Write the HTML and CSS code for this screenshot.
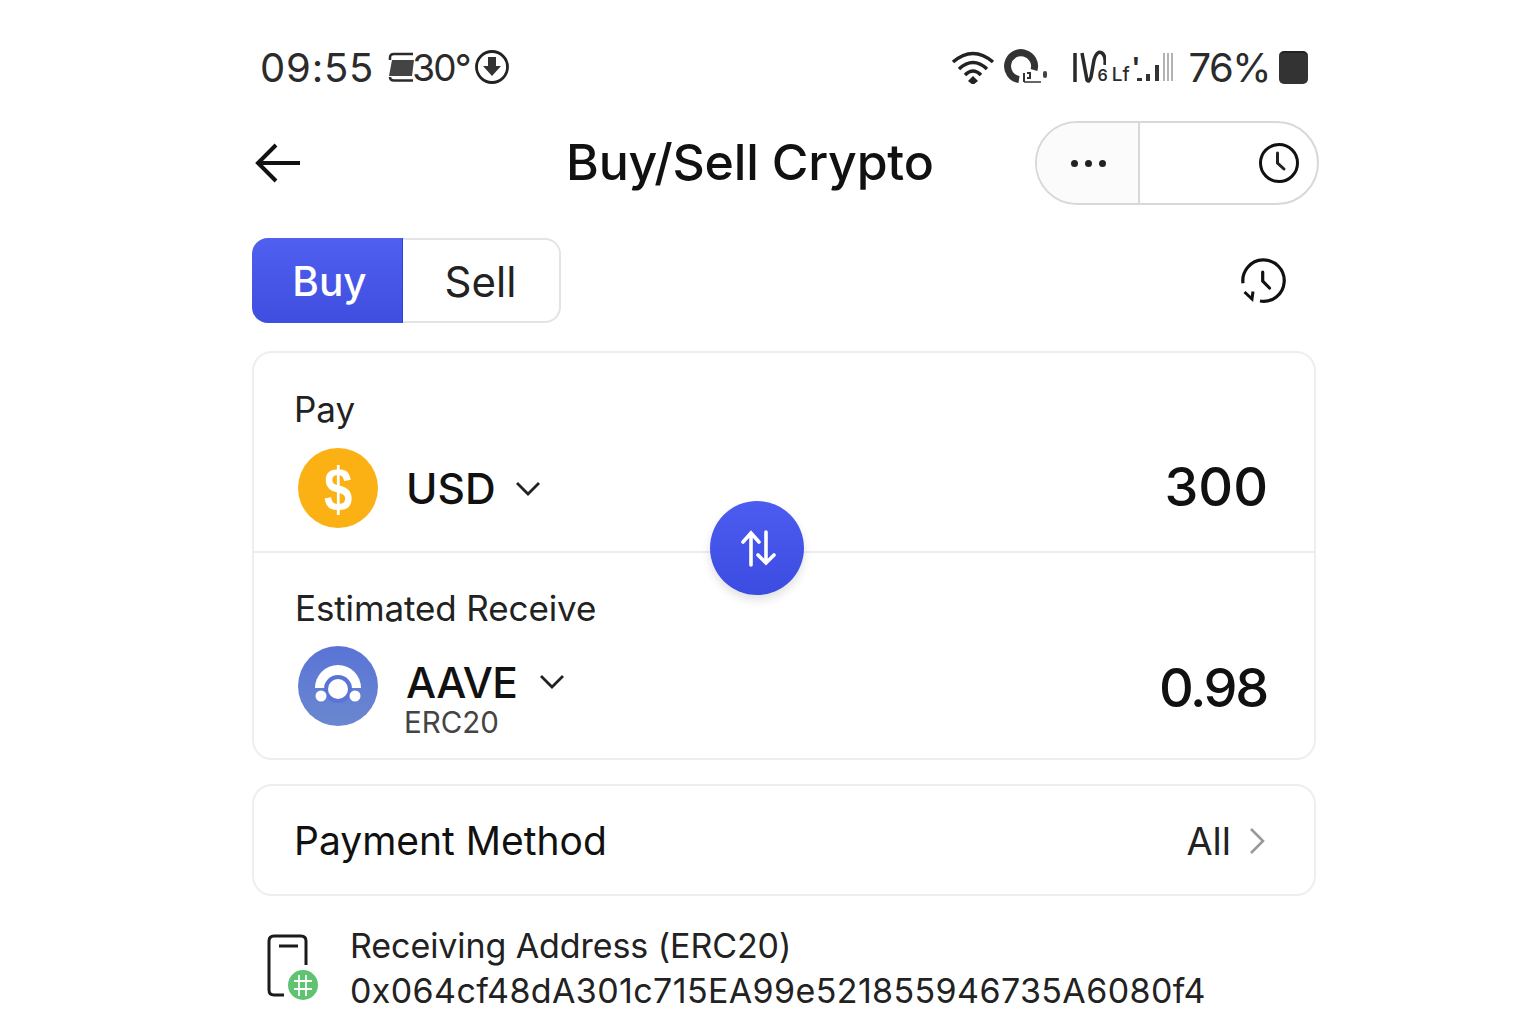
FILE: index.html
```html
<!DOCTYPE html>
<html lang="en">
<head>
<meta charset="UTF-8">
<title>Buy/Sell Crypto</title>
<link rel="stylesheet" href="styles.css">
</head>
<body>
<div class="screen">

  <div class="status">
    <div class="status-side">
      <span class="time">09:55</span>
      <svg class="ic-sim" width="28" height="32" viewBox="0 0 28 32"><path d="M3 9V6.500Q3 3 7 3H26M3 26Q3 29.500 7 29.500H26" fill="none" stroke="#2b2b2b" stroke-width="2.500"/><path d="M5 9H27L25 25H2Z" fill="#444"/></svg>
      <span class="temp">30°</span>
      <svg width="36" height="36" viewBox="0 0 36 36"><circle cx="18" cy="18" r="15.500" fill="none" stroke="#222" stroke-width="2.800"/><path d="M14 8H22V17H27L18 27L9 17H14Z" fill="#333"/></svg>
    </div>
    <div class="status-side">
      <svg class="ic-wifi" width="44" height="34" viewBox="0 0 44 34"><path d="M2 12Q22 -5 42 12M8 19Q22 6 36 19M14 25Q22 17 30 25" fill="none" stroke="#222" stroke-width="3.500"/><path d="M22 26L27 31L22 35L17 31Z" fill="#222"/></svg>
      <svg class="ic-q" width="46" height="36" viewBox="0 0 46 36"><path d="M16 30.500A13.500 13.500 0 1 1 31 21" fill="none" stroke="#333" stroke-width="7"/><path d="M21 33H38" stroke="#333" stroke-width="1.500"/><path d="M21 24V33M24 24H27V29H24" fill="none" stroke="#333" stroke-width="2"/><rect x="40" y="22" width="4" height="7" rx="2" fill="#444"/></svg>
      <div class="net">
        <svg class="net-mark" width="34" height="34" viewBox="0 0 34 34"><path d="M3 3V32M10 3L15 30Q17 33 19 27L22 10Q25 0 30 3Q34 6 33 15" fill="none" stroke="#2a2a2a" stroke-width="3.500"/></svg>
        <span class="net-a">6</span><span class="net-b">Lf</span><span class="net-c">'</span>
      </div>
      <svg class="ic-bars" width="38" height="32" viewBox="0 0 38 32"><rect x="0" y="27" width="5" height="3" fill="#333"/><rect x="9" y="23" width="4" height="7" fill="#333"/><rect x="18" y="14" width="4" height="16" fill="#333"/><path d="M27 2V30M31 2V30M35 2V30" stroke="#999" stroke-width="1.500"/></svg>
      <span class="batt-num">76%</span>
      <div class="batt"></div>
    </div>
  </div>

  <div class="header">
    <svg class="back" width="48" height="42" viewBox="0 0 48 42"><path d="M46 21H4M22 3L4 21L22 39" fill="none" stroke="#111" stroke-width="4"/></svg>
    <h1 class="title">Buy/Sell Crypto</h1>
    <div class="pill">
      <div class="pill-more"><i></i><i></i><i></i></div>
      <div class="pill-clock">
        <svg width="42" height="42" viewBox="0 0 42 42"><circle cx="21" cy="21" r="18.500" fill="none" stroke="#111" stroke-width="3"/><path d="M19.500 11V21L26 27" fill="none" stroke="#222" stroke-width="3" stroke-linecap="round"/></svg>
      </div>
    </div>
  </div>

  <div class="tabs-row">
    <div class="tabs">
      <div class="tab tab-on">Buy</div>
      <div class="tab">Sell</div>
    </div>
    <svg class="history" width="46" height="46" viewBox="0 0 46 46"><path d="M2 25.300A20.700 20.700 0 1 1 19 43" fill="none" stroke="#111" stroke-width="3.200"/><path d="M21.700 14V23L28.500 30" fill="none" stroke="#111" stroke-width="3.200" stroke-linecap="round"/><path d="M3.500 34L11 41L12 33.500" fill="none" stroke="#111" stroke-width="3"/></svg>
  </div>

  <div class="card swap-card">
    <div class="swap-part part-pay">
      <div class="label">Pay</div>
      <div class="coin-row">
        <div class="coin coin-usd"><span class="dollar">$</span></div>
        <span class="coin-name">USD</span>
        <svg class="chev" width="26" height="16" viewBox="0 0 26 16"><path d="M2 2L13 13L24 2" fill="none" stroke="#222" stroke-width="2.800"/></svg>
        <span class="amount">300</span>
      </div>
    </div>
    <div class="swap-part part-get">
      <div class="label">Estimated Receive</div>
      <div class="coin-row">
        <div class="coin coin-aave">
          <svg width="80" height="80" viewBox="0 0 80 80"><path d="M17 42A23 23 0 0 1 63 42Z" fill="#fff"/><circle cx="40" cy="43" r="14" fill="#5a74d6"/><circle cx="40" cy="43" r="10" fill="#fff"/><circle cx="23" cy="50" r="5.500" fill="#fff"/><circle cx="57" cy="50" r="5.500" fill="#fff"/></svg>
        </div>
        <div class="coin-text">
          <div class="coin-line"><span class="coin-name">AAVE</span>
            <svg class="chev" width="26" height="16" viewBox="0 0 26 16"><path d="M2 2L13 13L24 2" fill="none" stroke="#222" stroke-width="2.800"/></svg>
          </div>
          <div class="chain">ERC20</div>
        </div>
        <span class="amount amount-get">0.98</span>
      </div>
    </div>
    <div class="swap-btn">
      <svg width="40" height="40" viewBox="0 0 40 40"><path d="M14 37V5M6 14L14 5L22 14M29 4V35M21 27L29 35L37 27" fill="none" stroke="#fff" stroke-width="3.600" stroke-linecap="round"/></svg>
    </div>
  </div>

  <div class="card pay-method">
    <span class="pm-label">Payment Method</span>
    <span class="pm-val">All</span>
    <svg class="pm-arrow" width="16" height="28" viewBox="0 0 16 28"><path d="M2 2L14 14L2 26" fill="none" stroke="#999" stroke-width="2.600"/></svg>
  </div>

  <div class="address">
    <div class="addr-icon">
      <svg width="52" height="66" viewBox="0 0 52 66"><path d="M40 31V7Q40 2 35 2H8Q3 2 3 7V56Q3 61 8 61H18M13 12H32" fill="none" stroke="#1b1b1b" stroke-width="3"/><circle cx="37" cy="51" r="15" fill="#5fc372"/><path d="M28 47H46M28 55H46M33 41V62M40 41V62" stroke="#fff" stroke-width="1.800"/></svg>
    </div>
    <div class="addr-text">
      <div class="addr-title">Receiving Address (ERC20)</div>
      <div>0x064cf48dA301c715EA99e521855946735A6080f4</div>
    </div>
  </div>

</div>
</body>
</html>
```

FILE: styles.css
```css
html, body { margin: 0; padding: 0; background: #fff; }
body { font-family: Inter, "Liberation Sans", sans-serif; color: #111; }
.screen { width: 1064px; height: 1024px; margin-left: 252px; }

/* status bar */
.status { display: flex; justify-content: space-between; align-items: center; height: 36px; margin-top: 49px; padding: 0 8px; color: #2b2b2b; }
.status-side { display: flex; align-items: center; }
.time { font-size: 40px; letter-spacing: 0.8px; margin-right: 13px; }
.ic-sim { margin-right: -3px; }
.temp { font-size: 37px; letter-spacing: -1.8px; margin-right: 4px; }
.ic-wifi { margin-right: 8px; }
.ic-q { margin-right: 23px; }
.net { display: flex; align-items: flex-end; height: 34px; width: 65px; }
.net-mark { flex: none; }
.net-a { font-size: 16px; font-weight: 600; margin-left: -9px; line-height: 18px; }
.net-b { font-size: 19px; font-weight: 500; margin-left: 4px; line-height: 19px; }
.net-c { font-size: 26px; font-weight: 700; align-self: center; margin-left: 2px; line-height: 20px; }
.ic-bars { margin: 0 13px 0 0; }
.batt-num { font-size: 40px; letter-spacing: -1.5px; margin-right: 9px; }
.batt { width: 29px; height: 31px; background: #333; border-radius: 5px; border-top: 2px solid #222; }

/* header */
.header { position: relative; display: flex; align-items: center; height: 84px; margin-top: 36px; }
.back { margin-left: 2px; }
.title { position: absolute; left: 314px; top: 9px; margin: 0; font-size: 50px; font-weight: 500; letter-spacing: -0.2px; line-height: 64px; white-space: nowrap; }
.pill { display: flex; flex: none; width: 284px; height: 84px; box-sizing: border-box; margin-left: auto; margin-right: -3px; border: 2px solid #d8d8d8; border-radius: 42px; }
.pill-more { display: flex; align-items: center; justify-content: center; gap: 7px; width: 103px; padding-left: 2px; box-sizing: border-box; border-right: 2px solid #d8d8d8; background: #fbfbfb; border-radius: 40px 0 0 40px; }
.pill-more i { width: 7px; height: 7px; border-radius: 50%; background: #222; }
.pill-clock { flex: 1; display: flex; align-items: center; justify-content: flex-end; padding-right: 17px; }

/* tabs */
.tabs-row { display: flex; justify-content: space-between; align-items: center; margin-top: 33px; height: 85px; }
.tabs { display: flex; width: 309px; height: 85px; box-sizing: border-box; border: 2px solid #e4e4e4; border-left: 0; border-radius: 16px; }
.tab { flex: 1; display: flex; align-items: center; justify-content: center; padding: 1px 1px 0 0; font-size: 42px; color: #222; }
.tab-on { flex: none; width: 151px; height: 85px; margin-top: -2px; padding: 2px 0 0 5px; background: linear-gradient(#4f5ff0, #3f4edf); color: #fff; font-size: 40.500px; font-weight: 500; border-radius: 16px 0 0 16px; border-right: 1px solid #2b3fe0; box-sizing: border-box; }
.history { margin-right: 29px; }

/* cards */
.card { box-sizing: border-box; border: 2px solid #eee; border-radius: 20px; background: #fff; }
.swap-card { position: relative; margin-top: 28px; height: 409px; }
.swap-part { box-sizing: border-box; padding: 0 46px 0 40px; }
.part-pay { height: 200px; border-bottom: 2px solid #ededed; padding-top: 34px; }
.part-get { padding-top: 33px; }
.label { font-size: 35px; line-height: 44px; color: #222; }
.part-get .label { margin-left: 1px; letter-spacing: -0.120px; }
.coin-row { display: flex; align-items: center; }
.part-pay .coin-row { margin-top: 17px; }
.part-pay .amount { margin-bottom: 2px; }
.part-pay .chev { margin: 2px 0 0 19px; }
.part-get .coin-row { align-items: flex-start; margin-top: 16px; }
.coin { flex: none; display: flex; align-items: center; justify-content: center; width: 80px; height: 80px; margin-left: 4px; border-radius: 50%; }
.coin-usd { background: #fbb013; color: #fff; }
.dollar { font-family: "Liberation Sans", sans-serif; font-size: 62px; font-weight: 700; transform: scaleX(0.82); }
.coin-aave { background: linear-gradient(#5a74d6, #6a87cf); }
.coin-name { font-size: 42.500px; font-weight: 500; margin-left: 28px; }
.coin-line .coin-name { letter-spacing: -0.6px; }
.chev { margin-left: 22px; }
.amount { margin-left: auto; font-size: 54px; font-weight: 500; line-height: 68px; }
.coin-text { margin-top: 10px; }
.coin-line { display: flex; align-items: center; height: 52px; }
.chain { margin: -5px 0 0 26px; font-size: 29.500px; line-height: 38px; color: #444; }
.amount-get { margin: 8px 1px 0 auto; letter-spacing: -2.300px; }
.swap-btn { position: absolute; left: 456px; top: 148px; width: 94px; height: 94px; border-radius: 50%; display: flex; align-items: center; justify-content: center; background: linear-gradient(#4c5cf0, #3d4ce0); box-shadow: 0 5px 10px rgba(0,0,0,0.12); }

.pay-method { display: flex; align-items: center; height: 112px; margin-top: 24px; padding: 0 49px 0 40px; }
.pm-label { font-size: 39px; font-weight: 400; }
.pm-val { margin: 2px 18px 0 auto; font-size: 38px; color: #222; }
.pm-arrow { margin-top: 2px; }

/* address */
.address { display: flex; margin-top: 27px; }
.addr-icon { width: 98px; padding: 11px 0 0 14px; box-sizing: border-box; }
.addr-text { font-size: 34px; line-height: 45px; letter-spacing: 0.38px; color: #222; white-space: nowrap; }
.addr-title { letter-spacing: -0.080px; }
```
